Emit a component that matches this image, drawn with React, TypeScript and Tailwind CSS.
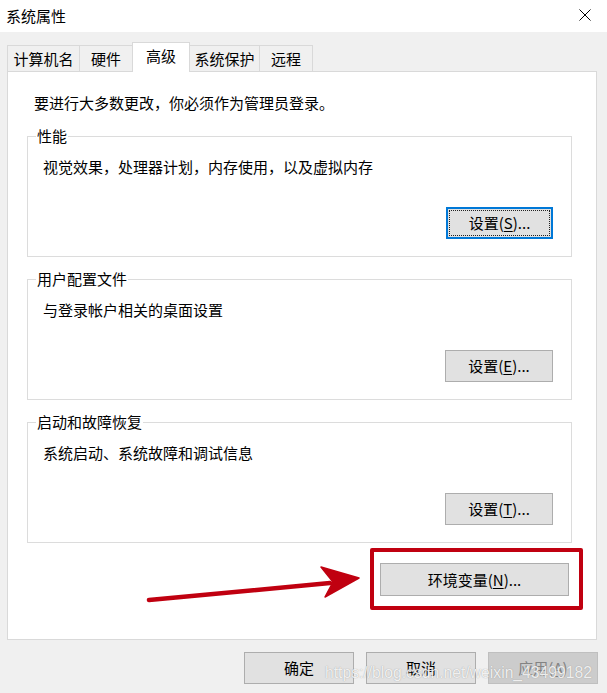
import React from "react";

type BtnProps = {
  pre: string;
  hot?: string;
  post?: string;
  width: string;
  focused?: boolean;
  disabled?: boolean;
};

// classic win10 push button
const WinButton: React.FC<BtnProps> = ({ pre, hot, post, width, focused, disabled }) => {
  const label = (
    <span className="leading-[20px]">
      {pre}
      {hot && <span className="underline underline-offset-2">{hot}</span>}
      {post}
    </span>
  );

  if (focused) {
    return (
      <div className={`${width} h-[32px] border-2 border-[#0078d7] bg-[#e1e1e1] p-[1px]`}>
        <div className="w-full h-full border border-dotted border-[#222] flex items-center justify-center">
          {label}
        </div>
      </div>
    );
  }

  return (
    <div
      className={`${width} h-[32px] border flex items-center justify-center ${
        disabled ? "bg-[#cccccc] border-[#bfbfbf] text-[#838383]" : "bg-[#e1e1e1] border-[#adadad]"
      }`}
    >
      {label}
    </div>
  );
};

const GroupBox: React.FC<{ title: string; text: string; children: React.ReactNode }> = ({ title, text, children }) => {
  return (
    <fieldset className="w-[545px] border border-[#dcdcdc] px-0 pb-[17px]">
      <legend className="ml-[8px] px-[1px] leading-[20px]">{title}</legend>
      <div className="pt-[11px] pl-[15px] leading-[20px]">{text}</div>
      <div className="mt-[30px] flex justify-end pr-[18px]">{children}</div>
    </fieldset>
  );
};

const tabs = [
  { name: "计算机名", w: "w-[73px]" },
  { name: "硬件", w: "w-[54px]" },
  { name: "高级", w: "w-[58px]", active: true },
  { name: "系统保护", w: "w-[71px]" },
  { name: "远程", w: "w-[54px]" },
];

export default function App() {
  return (
    <div className="relative w-[607px] h-[693px] overflow-hidden bg-[#f0f0f0] text-[15px] text-black font-['Noto_Sans_CJK_SC','Liberation_Sans',sans-serif]">
      {/* title bar */}
      <div className="h-[32px] bg-white flex items-center justify-between pl-[6px] pr-[16px]">
        <span className="leading-[20px]">系统属性</span>
        <svg width="12" height="12" viewBox="0 0 12 12" className="mt-[-2px]">
          <path d="M0.5 0.5 L11.5 11.5 M11.5 0.5 L0.5 11.5" stroke="#000" strokeWidth="1" />
        </svg>
      </div>

      <div className="pt-[10px] px-[7px]">
        {/* tab strip */}
        <div className="flex items-end h-[29px]">
          {tabs.map((t, i) => (
            <div
              key={t.name}
              className={`${t.w} ${i > 0 ? "-ml-px" : ""} border-x border-t border-[#d9d9d9] flex items-center justify-center leading-[20px] ${
                t.active ? "h-[30px] bg-white relative z-10 -mb-px pb-[3px]" : "h-[26px] bg-[#f0f0f0]"
              }`}
            >
              {t.name}
            </div>
          ))}
        </div>

        {/* tab page */}
        <div className="w-[590px] h-[569px] border border-[#d9d9d9] bg-white pl-[19px]">
          <div className="pt-[21px] pl-[7px] leading-[20px]">要进行大多数更改，你必须作为管理员登录。</div>

          <div className="mt-[13px] flex flex-col gap-[12px]">
            <GroupBox title="性能" text="视觉效果，处理器计划，内存使用，以及虚拟内存">
              <WinButton pre="设置(" hot="S" post=")..." width="w-[107px]" focused />
            </GroupBox>
            <GroupBox title="用户配置文件" text="与登录帐户相关的桌面设置">
              <WinButton pre="设置(" hot="E" post=")..." width="w-[108px]" />
            </GroupBox>
            <GroupBox title="启动和故障恢复" text="系统启动、系统故障和调试信息">
              <WinButton pre="设置(" hot="T" post=")..." width="w-[108px]" />
            </GroupBox>
          </div>

          <div className="mt-[20px] w-[545px] flex justify-end pr-[3px]">
            <WinButton pre="环境变量(" hot="N" post=")..." width="w-[189px] h-[33px]" />
          </div>
        </div>

        {/* dialog buttons */}
        <div className="mt-[12px] flex justify-end gap-[12px] pr-[2px]">
          <WinButton pre="确定" width="w-[110px]" />
          <WinButton pre="取消" width="w-[110px]" />
          <WinButton pre="应用(" hot="A" post=")" width="w-[110px]" disabled />
        </div>
      </div>

      {/* red annotation */}
      <div className="absolute left-[370px] top-[548px] w-[213px] h-[62px] border-[4px] border-[#c00010] rounded-[2px]" />
      <svg className="absolute left-0 top-0" width="607" height="693" viewBox="0 0 607 693">
        <line x1="149" y1="600" x2="330" y2="583" stroke="#c00010" strokeWidth="4.5" strokeLinecap="round" />
        <polygon points="321,567 359,578 325,597 333,582" fill="#c00010" stroke="#c00010" strokeWidth="1.5" strokeLinejoin="round" />
      </svg>

      {/* watermark */}
      <div className="absolute left-[325px] top-[662px] text-[15.7px] leading-[22px] text-white/85 font-['Liberation_Sans',sans-serif] [text-shadow:0_0_1px_rgba(90,90,90,0.6)]">
        https://blog.csdn.net/weixin_43499182
      </div>
    </div>
  );
}
